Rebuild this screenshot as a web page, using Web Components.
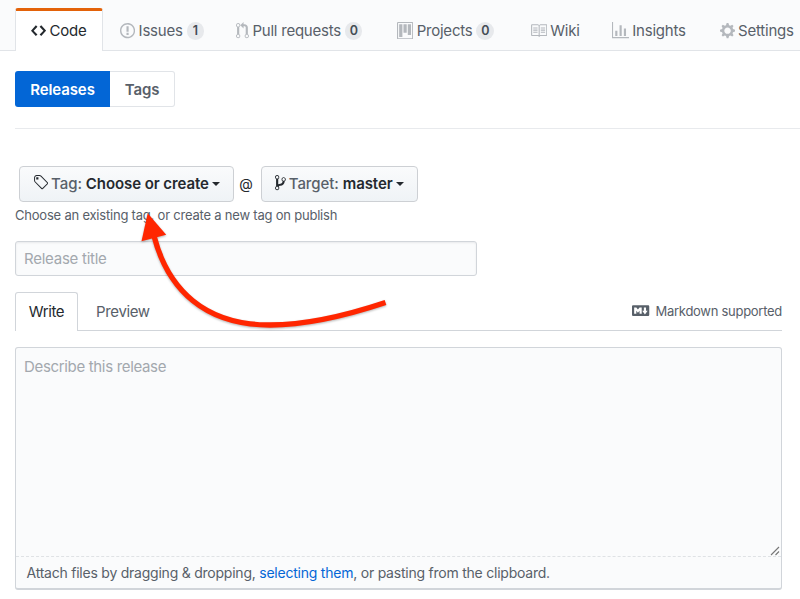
<!DOCTYPE html>
<html lang="en">
<head>
<meta charset="utf-8">
<title>New release</title>
<style>
  body {
    margin: 0;
    background: #fff;
    color: #24292e;
    font-family: Inter, "Liberation Sans", sans-serif;
    font-size: 15px;
    overflow: hidden;
  }
</style>
</head>
<body>
<release-page></release-page>

<script>
const ICONS = {
  code: [14, 'M9.5 3L8 4.5 11.5 8 8 11.5 9.5 13 14 8 9.5 3zm-5 0L0 8l4.5 5L6 11.5 2.5 8 6 4.5 4.5 3z'],
  issue: [14, 'M7 2.3c3.14 0 5.7 2.56 5.7 5.7s-2.56 5.7-5.7 5.7A5.71 5.71 0 0 1 1.3 8c0-3.14 2.56-5.7 5.7-5.7zM7 1C3.14 1 0 4.14 0 8s3.14 7 7 7 7-3.14 7-7-3.14-7-7-7zm1 3H6v5h2V4zm0 6H6v2h2v-2z'],
  pull: [12, 'M11 11.28V5c-.03-.78-.34-1.47-.94-2.06C9.46 2.35 8.78 2.03 8 2H7V0L4 3l3 3V4h1c.27.02.48.11.69.31.21.2.3.42.31.69v6.28A1.993 1.993 0 0 0 10 15a1.993 1.993 0 0 0 1-3.72zm-1 2.92c-.66 0-1.2-.55-1.2-1.2 0-.65.55-1.2 1.2-1.2.65 0 1.2.55 1.2 1.2 0 .65-.55 1.2-1.2 1.2zM4 3c0-1.11-.89-2-2-2a1.993 1.993 0 0 0-1 3.72v6.56A1.993 1.993 0 0 0 2 15a1.993 1.993 0 0 0 1-3.72V4.72c.59-.34 1-.98 1-1.72zm-.8 10c0 .66-.55 1.2-1.2 1.2-.65 0-1.2-.55-1.2-1.2 0-.65.55-1.2 1.2-1.2.65 0 1.2.55 1.2 1.2zM2 4.2C1.34 4.2.8 3.65.8 3c0-.65.55-1.2 1.2-1.2.65 0 1.2.55 1.2 1.2 0 .65-.55 1.2-1.2 1.2z'],
  project: [15, 'M10 12h3V2h-3v10zm-4-2h3V2H6v8zm-4 4h3V2H2v12zm-1 1h13V1H1v14zM14 0H1a1 1 0 0 0-1 1v14a1 1 0 0 0 1 1h13a1 1 0 0 0 1-1V1a1 1 0 0 0-1-1z'],
  book: [16, 'M3 5h4v1H3V5zm0 3h4V7H3v1zm0 2h4V9H3v1zm11-5h-4v1h4V5zm0 2h-4v1h4V7zm0 2h-4v1h4V9zm2-6v9c0 .55-.45 1-1 1H9.5l-1 1-1-1H2c-.55 0-1-.45-1-1V3c0-.55.45-1 1-1h5.5l1 1 1-1H15c.55 0 1 .45 1 1zm-8 .5L7.5 3H2v9h6V3.5zm7-.5H9.5l-.5.5V12h6V3z'],
  graph: [16, 'M16 14v1H0V0h1v14h15zM5 13H3V8h2v5zm4 0H7V3h2v10zm4 0h-2V6h2v7z'],
  gear: [14, 'M14 8.77v-1.6l-1.94-.64-.45-1.09.88-1.84-1.13-1.13-1.81.91-1.09-.45-.69-1.92h-1.6l-.63 1.94-1.11.45-1.84-.88-1.13 1.13.91 1.81-.45 1.09L0 7.23v1.59l1.94.64.45 1.09-.88 1.84 1.13 1.13 1.81-.91 1.09.45.69 1.92h1.59l.63-1.94 1.11-.45 1.84.88 1.13-1.13-.92-1.81.47-1.09L14 8.75v.02zM7 11c-1.66 0-3-1.34-3-3s1.34-3 3-3 3 1.34 3 3-1.34 3-3 3z'],
  tag: [14, 'M7.73 1.73C7.26 1.26 6.62 1 5.96 1H3.5C2.13 1 1 2.13 1 3.5v2.47c0 .66.27 1.3.73 1.77l6.06 6.06c.39.39 1.02.39 1.41 0l4.59-4.59a.996.996 0 0 0 0-1.41L7.73 1.73zM2.38 7.09c-.31-.3-.47-.7-.47-1.13V3.5c0-.88.72-1.59 1.59-1.59h2.47c.42 0 .83.16 1.13.47l6.14 6.13-4.73 4.73-6.13-6.15zM3.01 3h2v2H3V3h.01z'],
  branch: [10, 'M10 5c0-1.11-.89-2-2-2a1.993 1.993 0 0 0-1 3.72v.3c-.02.52-.23.98-.63 1.38-.4.4-.86.61-1.38.63-.83.02-1.48.16-2 .45V4.72a1.993 1.993 0 0 0-1-3.72C.88 1 0 1.89 0 3a2 2 0 0 0 1 1.72v6.56c-.59.35-1 .99-1 1.72 0 1.11.89 2 2 2 1.11 0 2-.89 2-2 0-.53-.2-1-.53-1.36.09-.06.48-.41.59-.47.25-.11.56-.17.94-.17 1.05-.05 1.95-.45 2.75-1.25S8.95 7.77 9 6.73h-.02C9.59 6.37 10 5.73 10 5zM2 1.8c.66 0 1.2.55 1.2 1.2 0 .65-.55 1.2-1.2 1.2C1.35 4.2.8 3.65.8 3c0-.65.55-1.2 1.2-1.2zm0 12.41c-.66 0-1.2-.55-1.2-1.2 0-.65.55-1.2 1.2-1.2.65 0 1.2.55 1.2 1.2 0 .65-.55 1.2-1.2 1.2zm6-8c-.66 0-1.2-.55-1.2-1.2 0-.65.55-1.2 1.2-1.2.65 0 1.2.55 1.2 1.2 0 .65-.55 1.2-1.2 1.2z'],
  markdown: [16, 'M14.85 3H1.15C.52 3 0 3.52 0 4.15v7.69C0 12.48.52 13 1.15 13h13.69c.64 0 1.15-.52 1.15-1.15v-7.7C16 3.52 15.48 3 14.85 3zM9 11H7V8L5.5 9.92 4 8v3H2V5h2l1.5 2L7 5h2v6zm2.99.5L9.5 8H11V5h2v3h1.5l-2.51 3.5z']
};

class OctIcon extends HTMLElement {
  constructor() {
    super();
    this.attachShadow({mode: 'open'});
  }

  connectedCallback() {
    const [width, path] = ICONS[this.getAttribute('name')];
    const scale = 1.08;
    this.shadowRoot.innerHTML = `
      <style>
        :host { display: block; flex: none; }
        svg { display: block; fill: currentColor; }
      </style>
      <svg width="${width * scale}" height="${16 * scale}" viewBox="0 0 ${width} 16"><path fill-rule="evenodd" d="${path}"/></svg>
    `;
  }
}
customElements.define('oct-icon', OctIcon);

class NavTab extends HTMLElement {
  constructor() {
    super();
    this.attachShadow({mode: 'open'});
  }

  connectedCallback() {
    const count = this.getAttribute('count');
    this.shadowRoot.innerHTML = `
      <style>
        :host {
          display: flex;
          align-items: center;
          box-sizing: border-box;
          height: 42px;
          padding: 3px 0 0 16px;
          color: #586069;
          white-space: nowrap;
        }
        :host([active]) {
          height: 43px;
          margin-right: 1px;
          padding: 0 0 1px 15px;
          background: #fff;
          color: #24292e;
          border: 1px solid #e1e4e8;
          border-top: 3px solid #e36209;
          border-bottom: 0;
          border-radius: 3px 3px 0 0;
        }
        oct-icon { color: #b4b8bd; margin-right: 3.5px; }
        :host([active]) oct-icon { color: #24292e; }
        .count {
          margin-left: 4px;
          min-width: 17.5px;
          height: 18px;
          line-height: 18px;
          border-radius: 9px;
          background: #e7e9ec;
          color: #444d56;
          font-size: 12.5px;
          font-weight: 600;
          text-align: center;
        }
      </style>
      <oct-icon name="${this.getAttribute('icon')}"></oct-icon>
      <slot></slot>
      ${count === null ? '' : `<span class="count">${count}</span>`}
    `;
  }
}
customElements.define('nav-tab', NavTab);

class RepoNav extends HTMLElement {
  constructor() {
    super();
    this.attachShadow({mode: 'open'}).innerHTML = `
      <style>
        :host {
          display: grid;
          grid-template-columns: 89px 116px 161px 132.500px 82px 108px 112px;
          align-items: start;
          box-sizing: border-box;
          height: 51px;
          padding: 8px 0 0 15px;
          background: #fafbfc;
          border-bottom: 1px solid #e1e4e8;
          letter-spacing: -0.23px;
        }
      </style>
      <nav-tab icon="code" active>Code</nav-tab>
      <nav-tab icon="issue" count="1">Issues</nav-tab>
      <nav-tab icon="pull" count="0">Pull requests</nav-tab>
      <nav-tab icon="project" count="0">Projects</nav-tab>
      <nav-tab icon="book">Wiki</nav-tab>
      <nav-tab icon="graph">Insights</nav-tab>
      <nav-tab icon="gear">Settings</nav-tab>
    `;
  }
}
customElements.define('repo-nav', RepoNav);

class SubNav extends HTMLElement {
  constructor() {
    super();
    this.attachShadow({mode: 'open'}).innerHTML = `
      <style>
        :host { display: flex; height: 36px; font-weight: 600; line-height: 37px; letter-spacing: -0.1px; text-align: center; }
        span { box-sizing: border-box; }
        .on { width: 95px; background: #0366d6; color: #fff; border-radius: 3px 0 0 3px; }
        .off {
          width: 65px;
          line-height: 35px;
          color: #586069;
          border: 1px solid #e1e4e8;
          border-left: 0;
          border-radius: 0 3px 3px 0;
        }
      </style>
      <span class="on">Releases</span><span class="off">Tags</span>
    `;
  }
}
customElements.define('sub-nav', SubNav);

class SelectButton extends HTMLElement {
  constructor() {
    super();
    this.attachShadow({mode: 'open'});
  }

  connectedCallback() {
    this.shadowRoot.innerHTML = `
      <style>
        :host {
          display: flex;
          align-items: center;
          box-sizing: border-box;
          height: 36px;
          padding: 0 12px 1px 13px;
          border: 1px solid #cdd0d4;
          border-radius: 4px;
          background: linear-gradient(#fafbfc, #eff3f6);
          white-space: nowrap;
          letter-spacing: -0.08px;
        }
        oct-icon { margin: -1px 3px 0 0; }
        .label { color: #586069; font-weight: 500; margin-right: 4px; }
        b { font-weight: 600; }
        .caret {
          margin-left: 3px;
          border: 4.500px solid transparent;
          border-top-color: #24292e;
          border-bottom: 0;
        }
      </style>
      <oct-icon name="${this.getAttribute('icon')}"></oct-icon>
      <span class="label">${this.getAttribute('label')}</span>
      <b><slot></slot></b>
      <span class="caret"></span>
    `;
  }
}
customElements.define('select-button', SelectButton);

class ReleaseEditor extends HTMLElement {
  constructor() {
    super();
    this.attachShadow({mode: 'open'}).innerHTML = `
      <style>
        :host { display: block; }
        .tabs {
          display: flex;
          box-sizing: border-box;
          height: 39px;
          border-bottom: 1px solid #d1d5da;
          line-height: 39px;
          letter-spacing: -0.35px;
          color: #586069;
        }
        .write {
          box-sizing: border-box;
          width: 63px;
          height: 39px;
          line-height: 38px;
          background: #fff;
          color: #24292e;
          border: 1px solid #d1d5da;
          border-bottom: 0;
          border-radius: 3px 3px 0 0;
          text-align: center;
        }
        .preview { margin-left: 18px; }
        .markdown {
          display: flex;
          align-items: center;
          gap: 6px;
          margin-left: auto;
          font-size: 13px;
          letter-spacing: -0.28px;
        }
        .box {
          display: flex;
          flex-direction: column;
          box-sizing: border-box;
          height: 243px;
          margin-top: 16px;
          border: 1px solid #d1d5da;
          border-bottom-width: 2px;
          border-radius: 3px;
          background: #fafbfc;
        }
        .text {
          display: flex;
          flex: 1;
          justify-content: space-between;
          padding: 9px 1px 0 8px;
          color: #a3a8ae;
          letter-spacing: -0.33px;
        }
        .grip { align-self: flex-end; }
        .attach {
          box-sizing: border-box;
          height: 32px;
          padding-left: 10.500px;
          border-top: 1px dashed #dfe2e5;
          line-height: 32px;
          font-size: 14px;
          letter-spacing: -0.23px;
          color: #586069;
        }
        .attach span { color: #0366d6; }
      </style>
      <div class="tabs">
        <span class="write">Write</span>
        <span class="preview">Preview</span>
        <span class="markdown"><oct-icon name="markdown"></oct-icon><span>Markdown supported</span></span>
      </div>
      <div class="box">
        <div class="text">
          <span>Describe this release</span>
          <svg class="grip" width="10" height="10" fill="none" stroke="#777" stroke-width="1.1"><path d="M1 9L9 1M5.500 9L9 5.500"/></svg>
        </div>
        <div class="attach">Attach files by dragging &amp; dropping, <span>selecting them</span>, or pasting from the clipboard.</div>
      </div>
    `;
  }
}
customElements.define('release-editor', ReleaseEditor);

class CalloutArrow extends HTMLElement {
  constructor() {
    super();
    this.attachShadow({mode: 'open'}).innerHTML = `
      <style>
        :host { position: absolute; left: 0; top: 0; pointer-events: none; }
        svg { display: block; filter: drop-shadow(0 1px 1px rgba(0, 0, 0, .3)); }
      </style>
      <svg width="400" height="340">
        <path d="M154 236C168 290 205 325 270 325C308 325 345 316 385.500 302.500" fill="none" stroke="#ff2600" stroke-width="5.300"/>
        <path d="M147.700 213.300L166.200 234.700L141.500 241.200Z" fill="#ff2600"/>
      </svg>
    `;
  }
}
customElements.define('callout-arrow', CalloutArrow);

class ReleasePage extends HTMLElement {
  constructor() {
    super();
    this.attachShadow({mode: 'open'}).innerHTML = `
      <style>
        :host { display: block; position: relative; height: 599px; }
        main { padding: 20px 18px 0 15px; }
        hr { margin: 21px -18px 37px 0; border: 0; border-top: 1px solid #e8eaed; }
        .pick { display: flex; align-items: center; padding-left: 4px; }
        .at { box-sizing: border-box; width: 27px; padding: 0 3px 2px 0; text-align: center; font-size: 14px; }
        .tag { width: 215px; }
        .target { width: 157px; }
        .note { margin: 5px 0 17px; font-size: 13px; line-height: 17px; letter-spacing: -0.21px; color: #586069; }
        .title {
          box-sizing: border-box;
          width: 462px;
          height: 35px;
          margin-bottom: 16px;
          padding-left: 8px;
          border: 1px solid #d1d5da;
          border-radius: 3px;
          background: #fafbfc;
          box-shadow: inset 0 1px 2px rgba(27, 31, 35, .075);
          line-height: 34px;
          letter-spacing: -0.25px;
          color: #a3a8ae;
        }
      </style>
      <repo-nav></repo-nav>
      <main>
        <sub-nav></sub-nav>
        <hr>
        <div class="pick">
          <select-button class="tag" icon="tag" label="Tag:">Choose or create</select-button>
          <span class="at">@</span>
          <select-button class="target" icon="branch" label="Target:">master</select-button>
        </div>
        <div class="note">Choose an existing tag, or create a new tag on publish</div>
        <div class="title">Release title</div>
        <release-editor></release-editor>
      </main>
      <callout-arrow></callout-arrow>
    `;
  }
}
customElements.define('release-page', ReleasePage);
</script>
</body>
</html>
